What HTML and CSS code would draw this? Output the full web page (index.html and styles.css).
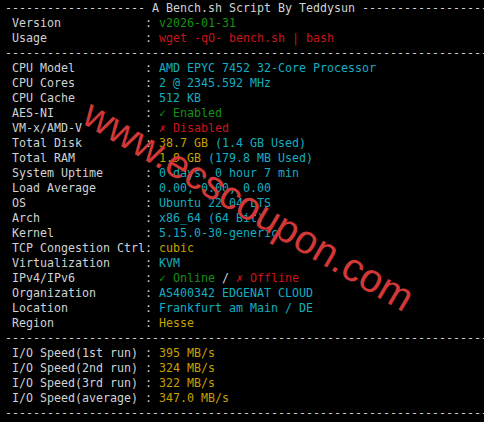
FILE: index.html
```html
<!DOCTYPE html>
<html lang="en">
<head>
<meta charset="utf-8">
<title>Bench.sh</title>
<link rel="stylesheet" href="styles.css">
</head>
<body>
<div class="term">
<div class="line">-------------------- A Bench.sh Script By Teddysun -------------------</div>
<div class="line"> Version            : <span class="g">v2026-01-31</span></div>
<div class="line"> Usage              : <span class="r">wget -qO- bench.sh | bash</span></div>
<div class="line">----------------------------------------------------------------------</div>
<div class="line"> CPU Model          : <span class="c">AMD EPYC 7452 32-Core Processor</span></div>
<div class="line"> CPU Cores          : <span class="c">2 @ 2345.592 MHz</span></div>
<div class="line"> CPU Cache          : <span class="c">512 KB</span></div>
<div class="line"> AES-NI             : <span class="g">✓ Enabled</span></div>
<div class="line"> VM-x/AMD-V         : <span class="r">✗ Disabled</span></div>
<div class="line"> Total Disk         : <span class="y">38.7 GB</span> <span class="c">(1.4 GB Used)</span></div>
<div class="line"> Total RAM          : <span class="y">1.9 GB</span> <span class="c">(179.8 MB Used)</span></div>
<div class="line"> System Uptime      : <span class="c">0 days, 0 hour 7 min</span></div>
<div class="line"> Load Average       : <span class="c">0.00, 0.00, 0.00</span></div>
<div class="line"> OS                 : <span class="c">Ubuntu 22.04 LTS</span></div>
<div class="line"> Arch               : <span class="c">x86_64 (64 Bit)</span></div>
<div class="line"> Kernel             : <span class="c">5.15.0-30-generic</span></div>
<div class="line"> TCP Congestion Ctrl: <span class="y">cubic</span></div>
<div class="line"> Virtualization     : <span class="c">KVM</span></div>
<div class="line"> IPv4/IPv6          : <span class="g">✓ Online</span> / <span class="r">✗ Offline</span></div>
<div class="line"> Organization       : <span class="c">AS400342 EDGENAT CLOUD</span></div>
<div class="line"> Location           : <span class="c">Frankfurt am Main / DE</span></div>
<div class="line"> Region             : <span class="y">Hesse</span></div>
<div class="line">----------------------------------------------------------------------</div>
<div class="line"> I/O Speed(1st run) : <span class="y">395 MB/s</span></div>
<div class="line"> I/O Speed(2nd run) : <span class="y">324 MB/s</span></div>
<div class="line"> I/O Speed(3rd run) : <span class="y">322 MB/s</span></div>
<div class="line"> I/O Speed(average) : <span class="y">347.0 MB/s</span></div>
<div class="line">----------------------------------------------------------------------</div>
</div>
<div class="watermark">www.ecscoupon.com</div>
</body>
</html>
```
FILE: styles.css
```css
html, body {
  margin: 0;
  padding: 0;
  background: #000;
  overflow: hidden;
  width: 484px;
  height: 422px;
}
body {
  position: relative;
}
.term {
  padding: 1px 0 0 5px;
  font-family: "DejaVu Sans Mono", monospace;
  font-size: 11.63px;
  line-height: 15px;
  color: #cfd2d6;
}
.line {
  height: 15px;
  white-space: pre;
}
.g { color: #168f16; }
.r { color: #c8141c; }
.c { color: #14adc0; }
.y { color: #c6a000; }
.watermark {
  position: absolute;
  left: 80px;
  top: 88px;
  font-family: "Liberation Sans", Arial, sans-serif;
  font-size: 40px;
  line-height: 40px;
  color: #d23838;
  white-space: nowrap;
  transform-origin: 0 34px;
  transform: rotate(30.5deg);
}
```
